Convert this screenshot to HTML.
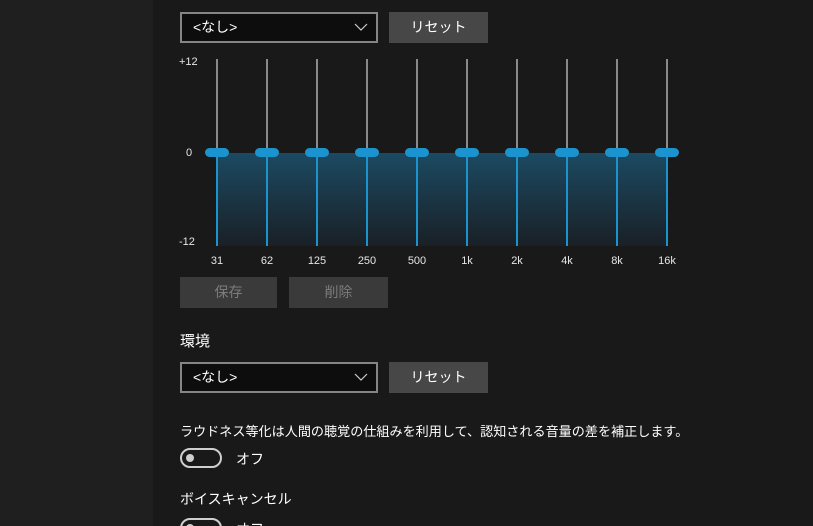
<!DOCTYPE html>
<html><head><meta charset="utf-8"><style>
*{margin:0;padding:0;box-sizing:border-box}
html{width:813px;height:526px;overflow:hidden;background:#191919}
body{width:813px;height:526px;background:#191919;position:relative;overflow:hidden;font-family:"Liberation Sans","Noto Sans CJK JP",sans-serif;color:#fff}
.left{position:absolute;left:0;top:0;width:153px;height:526px;background:#1f1f1f}
.abs{position:absolute}
.dd{position:absolute;left:180px;width:198px;height:31px;border:2px solid #858585;background:#0d0d0d;font-size:14px;padding-left:11px;line-height:27px}
.dd svg{position:absolute;right:8px;top:9px}
.btn{position:absolute;width:99px;height:31px;background:#474747;font-size:14px;text-align:center;line-height:31px}
.dis{background:#3a3a3a;color:#7c7c7c;height:31px}
.lbl{position:absolute;font-size:11px;color:#e6e6e6}
.track{position:absolute;width:2px;background:#8a8a8a}
.thumb{position:absolute;width:24px;height:9px;border-radius:5px;background:#1b93cf}
.fq{position:absolute;top:255px;font-size:11px;width:40px;text-align:center;color:#e6e6e6}
.tog{position:absolute;left:180px;width:42px;height:20px;border:2px solid #cfcfcf;border-radius:10px}
.tog::after{content:"";position:absolute;left:4px;top:4px;width:8px;height:8px;border-radius:50%;background:#cfcfcf}
</style></head><body>
<div class="left"></div>
<div class="dd" style="top:12px">&lt;なし&gt;<svg width="14" height="8"><path d="M1 1 L7 7 L13 1" stroke="#ccc" fill="none" stroke-width="1.2"/></svg></div>
<div class="btn" style="left:389px;top:12px">リセット</div>
<div class="lbl" style="left:179px;top:56px">+12</div>
<div class="lbl" style="left:186px;top:147px">0</div>
<div class="lbl" style="left:179px;top:236px">-12</div>
<div class="abs" style="left:217px;top:153px;width:451px;height:93px;background:linear-gradient(#1b4a62,#1a2026)"></div>
<div id="eq"></div>
<script>
var f=["31","62","125","250","500","1k","2k","4k","8k","16k"],h="";
for(var i=0;i<10;i++){var x=217+i*50;
h+='<div class="track" style="left:'+(x-1)+'px;top:59px;height:94px"></div>';
h+='<div class="track" style="left:'+(x-1)+'px;top:153px;height:93px;background:#1b93cf"></div>';
h+='<div class="thumb" style="left:'+(x-12)+'px;top:148px"></div>';
h+='<div class="fq" style="left:'+(x-20)+'px">'+f[i]+'</div>';}
document.getElementById('eq').innerHTML=h;
</script>
<div class="btn dis" style="left:180px;top:277px;width:97px">保存</div>
<div class="btn dis" style="left:289px;top:277px">削除</div>
<div class="abs" style="left:180px;top:330px;font-size:15px">環境</div>
<div class="dd" style="top:362px">&lt;なし&gt;<svg width="14" height="8"><path d="M1 1 L7 7 L13 1" stroke="#ccc" fill="none" stroke-width="1.2"/></svg></div>
<div class="btn" style="left:389px;top:362px">リセット</div>
<div class="abs" style="left:180px;top:421px;font-size:13.1px;white-space:nowrap">ラウドネス等化は人間の聴覚の仕組みを利用して、認知される音量の差を補正します。</div>
<div class="tog" style="top:448px"></div>
<div class="abs" style="left:236px;top:449px;font-size:14px">オフ</div>
<div class="abs" style="left:180px;top:489px;font-size:14px">ボイスキャンセル</div>
<div class="tog" style="top:518px"></div>
<div class="abs" style="left:236px;top:519px;font-size:14px">オフ</div>
</body></html>
